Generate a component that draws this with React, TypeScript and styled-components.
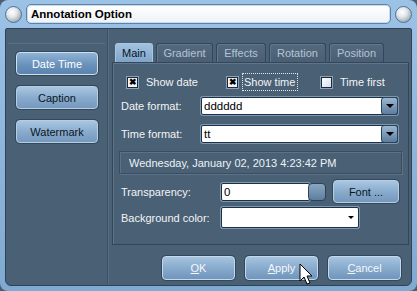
import React from "react";
import styled, { createGlobalStyle } from "styled-components";

const GlobalStyle = createGlobalStyle`
  html, body { margin: 0; padding: 0; background: #4a5e73; }
  body { font-family: "Liberation Sans", Arial, sans-serif; font-size: 11px; }
`;

const Window = styled.div`
  position: relative;
  width: 417px;
  height: 291px;
  box-sizing: border-box;
  background: linear-gradient(#9cc2e6, #80a9d2);
  border-radius: 8px;
  display: flex;
  flex-direction: column;
  padding: 0 5px 5px 5px;
  overflow: hidden;
`;

const TitleBar = styled.div`
  flex: none;
  height: 28px;
  display: flex;
  align-items: center;
  gap: 4px;
`;

const Knob = styled.div`
  width: 15px;
  height: 15px;
  border-radius: 50%;
  background: radial-gradient(circle at 40% 35%, #ffffff 0%, #e4e8ec 35%, #9aa4ae 80%, #6b7782 100%);
  border: 1px solid #4f7396;
  flex: none;
`;

const TitleBox = styled.div`
  flex: 1;
  height: 18px;
  border-radius: 5px;
  background: linear-gradient(#ffffff, #eef2f6);
  border: 1px solid #5b82a8;
  box-shadow: inset 0 0 0 1px #c9dced;
  display: flex;
  align-items: center;
  padding-left: 4px;
  font-weight: bold;
  font-size: 11.5px;
  color: #000;
`;

const Body = styled.div`
  flex: 1;
  min-height: 0;
  display: flex;
  background: #4a6075;
  border: 1px solid #2f4256;
  border-radius: 2px 2px 6px 6px;
`;

const Sidebar = styled.div`
  width: 101px;
  border-right: 1px solid #3c4f63;
  box-shadow: 1px 0 0 #5a6e83;
  display: flex;
  flex-direction: column;
  padding-top: 14px;
`;

const SideGroup = styled.div`
  border-top: 1px solid #5c7186;
  margin: 0 2px;
  padding: 8px 7px 0 8px;
  display: flex;
  flex-direction: column;
  gap: 11px;
`;

const SideButton = styled.div<{ $active?: boolean }>`
  height: 21px;
  border-radius: 4px;
  border: 1px solid ${({ $active }) => ($active ? "#cfe0ef" : "#b6cde2")};
  background: ${({ $active }) =>
    $active
      ? "linear-gradient(#8fb3d6, #6a92bb 55%, #5a83ad)"
      : "linear-gradient(#a9c6e2, #86a9cc 55%, #7598bd)"};
  box-shadow: 0 0 0 1px #34485c;
  color: ${({ $active }) => ($active ? "#ffffff" : "#0c1622")};
  font-size: 11px;
  display: flex;
  align-items: center;
  justify-content: center;
`;

const Main = styled.div`
  flex: 1;
  display: flex;
  flex-direction: column;
  padding: 14px 2px 0 4px;
`;

const Tabs = styled.div`
  display: flex;
  gap: 3px;
  padding-left: 3px;
  height: 19px;
  flex: none;
`;

const Tab = styled.div<{ $active?: boolean; $w: number }>`
  width: ${({ $w }) => $w}px;
  box-sizing: border-box;
  border: 1px solid ${({ $active }) => ($active ? "#a8c6e2" : "#33475b")};
  border-bottom: none;
  border-radius: 3px 3px 0 0;
  background: ${({ $active }) =>
    $active ? "linear-gradient(#a2c2e0, #7fa4c9)" : "linear-gradient(#55697e, #4b5f74)"};
  box-shadow: ${({ $active }) => ($active ? "none" : "inset 1px 1px 0 #62778c")};
  color: ${({ $active }) => ($active ? "#07111c" : "#b4c3d2")};
  font-size: 11px;
  display: flex;
  align-items: center;
  justify-content: center;
`;

const Panel = styled.div`
  flex: none;
  box-sizing: border-box;
  height: 183px;
  border: 1px solid #33475b;
  box-shadow: inset 1px 1px 0 #60758a;
  display: flex;
  flex-direction: column;
  padding: 10px 0 0 8px;
  color: #f2f4f6;
  font-size: 11px;
`;

const CheckRow = styled.div`
  display: flex;
  align-items: center;
  height: 18px;
  padding-left: 6px;
`;

const CheckItem = styled.div<{ $w: number }>`
  width: ${({ $w }) => $w}px;
  display: flex;
  align-items: center;
  gap: 8px;
`;

const Box = styled.div<{ $checked?: boolean }>`
  width: 9px;
  height: 9px;
  border: 1px solid #1c2a38;
  background: ${({ $checked }) => ($checked ? "#f4f4f4" : "linear-gradient(135deg, #ffffff, #d7dee6)")};
  box-shadow: 0 0 0 1px #8aa3bb;
  display: flex;
  align-items: center;
  justify-content: center;
  font-size: 9px;
  font-weight: bold;
  line-height: 1;
  color: #000;
`;

const Focus = styled.span`
  outline: 1px dotted #e0e6ec;
  padding: 2px 2px 2px 1px;
  margin-left: -3px;
`;

const FieldRow = styled.div<{ $mt: number }>`
  display: flex;
  align-items: center;
  margin-top: ${({ $mt }) => $mt}px;
`;

const Label = styled.div<{ $w: number }>`
  width: ${({ $w }) => $w}px;
  flex: none;
`;

const Combo = styled.div<{ $w: number; $h?: number }>`
  width: ${({ $w }) => $w}px;
  height: ${({ $h }) => $h ?? 18}px;
  box-sizing: border-box;
  border: 1px solid #1e3046;
  box-shadow: 0 0 0 1px #7d98b3;
  border-radius: 2px;
  background: #fff;
  display: flex;
  align-items: center;
  color: #000;
  font-size: 11.5px;
  padding-left: 2px;
`;

const ComboText = styled.div`
  flex: 1;
`;

const DropBtn = styled.div`
  width: 15px;
  height: 16px;
  border-radius: 3px;
  background: linear-gradient(#9bb7d1, #5d7d9e);
  border: 1px solid #2c4258;
  display: flex;
  align-items: center;
  justify-content: center;
  margin-right: -1px;
`;

const Arrow = styled.div`
  width: 0;
  height: 0;
  border-left: 4px solid transparent;
  border-right: 4px solid transparent;
  border-top: 4px solid #000;
`;

const Preview = styled.div`
  margin: 8px 6px 0 -2px;
  height: 21px;
  border: 1px solid #3a4d61;
  box-shadow: inset 1px 1px 0 #5d7287, 1px 1px 0 #5d7287;
  display: flex;
  align-items: center;
  padding-left: 9px;
  color: #eef2f6;
`;

const Spin = styled.div`
  width: 16px;
  height: 16px;
  border-radius: 4px;
  background: linear-gradient(#8aa6c2, #5e7e9f);
  border: 1px solid #2c4258;
  margin-left: -2px;
`;

const FontBtn = styled.div`
  margin-left: 7px;
  width: 64px;
  height: 21px;
  border-radius: 4px;
  border: 1px solid #b6cde2;
  box-shadow: 0 0 0 1px #34485c;
  background: linear-gradient(#a9c6e2, #86a9cc 55%, #7598bd);
  color: #0c1622;
  display: flex;
  align-items: center;
  justify-content: center;
`;

const ColorArrow = styled.div`
  width: 0;
  height: 0;
  border-left: 3px solid transparent;
  border-right: 3px solid transparent;
  border-top: 3px solid #000;
  margin-right: 4px;
`;

const Footer = styled.div`
  display: flex;
  justify-content: flex-end;
  gap: 10px;
  padding: 11px 8px 0 0;
`;

const DlgButton = styled.div`
  width: 71px;
  height: 22px;
  border-radius: 4px;
  border: 1px solid #c5d9ec;
  box-shadow: 0 0 0 1px #34485c;
  background: linear-gradient(#a7c4e0, #85a8cb 55%, #7195bb);
  color: #f4f7fa;
  font-size: 11px;
  display: flex;
  align-items: center;
  justify-content: center;
  u { text-decoration: underline; }
`;

const Cursor = styled.svg`
  position: absolute;
  left: 299px;
  top: 263px;
`;

export default function App() {
  return (
    <>
      <GlobalStyle />
      <Window>
        <TitleBar>
          <Knob />
          <TitleBox>Annotation Option</TitleBox>
          <Knob />
        </TitleBar>
        <Body>
          <Sidebar>
            <SideGroup>
              <SideButton $active>Date Time</SideButton>
              <SideButton>Caption</SideButton>
              <SideButton>Watermark</SideButton>
            </SideGroup>
          </Sidebar>
          <Main>
            <Tabs>
              <Tab $active $w={38}>Main</Tab>
              <Tab $w={57}>Gradient</Tab>
              <Tab $w={50}>Effects</Tab>
              <Tab $w={57}>Rotation</Tab>
              <Tab $w={55}>Position</Tab>
            </Tabs>
            <Panel>
              <CheckRow>
                <CheckItem $w={100}>
                  <Box $checked>✖</Box>
                  Show date
                </CheckItem>
                <CheckItem $w={94}>
                  <Box $checked>✖</Box>
                  <Focus>Show time</Focus>
                </CheckItem>
                <CheckItem $w={80}>
                  <Box />
                  Time first
                </CheckItem>
              </CheckRow>
              <FieldRow $mt={6}>
                <Label $w={80}>Date format:</Label>
                <Combo $w={197}>
                  <ComboText>dddddd</ComboText>
                  <DropBtn><Arrow /></DropBtn>
                </Combo>
              </FieldRow>
              <FieldRow $mt={10}>
                <Label $w={80}>Time format:</Label>
                <Combo $w={197}>
                  <ComboText>tt</ComboText>
                  <DropBtn><Arrow /></DropBtn>
                </Combo>
              </FieldRow>
              <Preview>Wednesday, January 02, 2013 4:23:42 PM</Preview>
              <FieldRow $mt={6}>
                <Label $w={100}>Transparency:</Label>
                <Combo $w={89}>
                  <ComboText>0</ComboText>
                </Combo>
                <Spin />
                <FontBtn>Font ...</FontBtn>
              </FieldRow>
              <FieldRow $mt={4}>
                <Label $w={100}>Background color:</Label>
                <Combo $w={138} $h={21}>
                  <ComboText />
                  <ColorArrow />
                </Combo>
              </FieldRow>
            </Panel>
            <Footer>
              <DlgButton><u>O</u>K</DlgButton>
              <DlgButton><u>A</u>pply</DlgButton>
              <DlgButton><u>C</u>ancel</DlgButton>
            </Footer>
          </Main>
        </Body>
        <Cursor width="14" height="24" viewBox="0 0 14 24">
          <path d="M1 1 L1 18 L5 14 L8 21 L11 20 L8 13 L13 13 Z" fill="#fff" stroke="#000" strokeWidth="1" />
        </Cursor>
      </Window>
    </>
  );
}
